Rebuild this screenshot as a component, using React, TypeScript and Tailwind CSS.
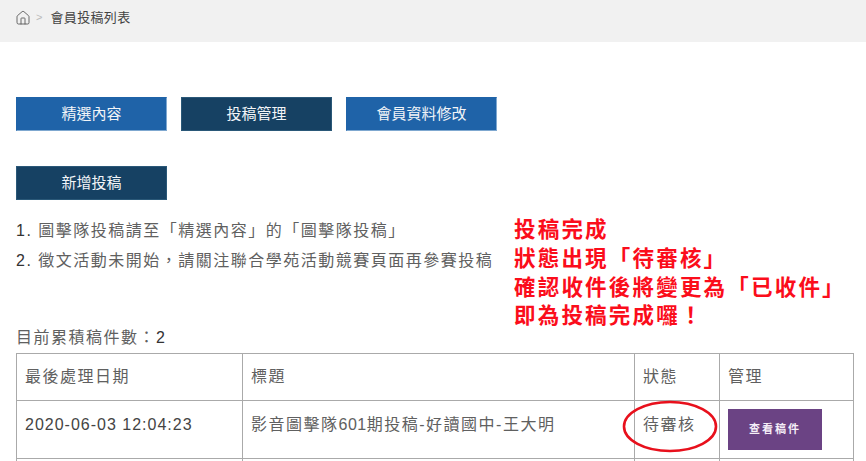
import { House } from "lucide-react";

const font = { fontFamily: '"Liberation Sans", "Noto Sans CJK TC", sans-serif' };

function NavButton({ label, active }: { label: string; active?: boolean }) {
  return (
    <div
      className={
        active
          ? "w-[151px] h-[34px] flex items-center justify-center bg-[#164163] border border-[#2a5878] text-[15px] leading-[20px] text-[#f2f5f8]"
          : "w-[151px] h-[34px] flex items-center justify-center bg-[#1f63a8] border border-[#1f63a8] border-b-[#7fa8d0] border-r-[#7fa8d0] text-[15px] leading-[20px] text-[#f2f5f8]"
      }
    >
      {label}
    </div>
  );
}

export default function App() {
  return (
    <div className="relative w-[866px] h-[461px] overflow-hidden bg-white text-[#606060]" style={font}>
      <div className="h-[42px] bg-[#f1f1f1] flex items-center pl-[15px] pb-[7px]">
        <House size={16} strokeWidth={1.3} className="text-[#555]" />
        <span className="ml-[5px] text-[11px] text-[#bbb]">&gt;</span>
        <span className="ml-[8px] text-[13px] tracking-[0.35px] text-[#444]">會員投稿列表</span>
      </div>

      <div className="px-[16px]">
        <div className="flex gap-[14px] mt-[55px]">
          <NavButton label="精選內容" />
          <NavButton label="投稿管理" active />
          <NavButton label="會員資料修改" />
        </div>
        <div className="mt-[35px]">
          <NavButton label="新增投稿" active />
        </div>

        <ol className="mt-[16px] text-[16px] leading-[30px] tracking-[1.5px]">
          <li><span className="text-[#333]">1.</span> 圖擊隊投稿請至「精選內容」的「圖擊隊投稿」</li>
          <li><span className="text-[#333]">2.</span> 徵文活動未開始，請關注聯合學苑活動競賽頁面再參賽投稿</li>
        </ol>

        <div className="mt-[51px] text-[16px] leading-[22px] tracking-[1.5px]">
          目前累積稿件數：<span className="text-[#333]">2</span>
        </div>

        <table className="mt-[4px] w-[838px] table-fixed border-collapse text-[16px] tracking-[1.5px]">
          <colgroup>
            <col className="w-[226px]" />
            <col className="w-[392px]" />
            <col className="w-[85px]" />
            <col />
          </colgroup>
          <tbody>
            <tr className="h-[47px]">
              <td className="border border-[#aaa] pl-[8px]">最後處理日期</td>
              <td className="border border-[#aaa] pl-[8px]">標題</td>
              <td className="border border-[#aaa] pl-[8px]">狀態</td>
              <td className="border border-[#aaa] pl-[8px]">管理</td>
            </tr>
            <tr className="h-[58px]">
              <td className="border border-[#aaa] pl-[8px] align-top pt-[12px] tracking-[1px] text-[#444]">2020-06-03 12:04:23</td>
              <td className="border border-[#aaa] pl-[8px] align-top pt-[12px]">影音圖擊隊<span className="tracking-[0.5px]">601</span>期投稿-好讀國中-王大明</td>
              <td className="border border-[#aaa] pl-[8px] align-top pt-[12px]">待審核</td>
              <td className="border border-[#aaa] pl-[8px] align-top pt-[8px]">
                <div className="w-[94px] h-[41px] flex items-center justify-center bg-[#6b4384] text-[11px] font-bold tracking-[2px] text-[#f4eef7]">
                  查看稿件
                </div>
              </td>
            </tr>
            <tr className="h-[20px]">
              <td className="border border-[#aaa]" />
              <td className="border border-[#aaa]" />
              <td className="border border-[#aaa]" />
              <td className="border border-[#aaa]" />
            </tr>
          </tbody>
        </table>
      </div>

      {/* annotation pasted over the screenshot */}
      <div className="absolute left-[514px] top-[216px] text-[21.5px] leading-[28.8px] font-bold tracking-[2.2px] text-[#fb0d1b] whitespace-nowrap">
        <div>投稿完成</div>
        <div>狀態出現「待審核」</div>
        <div>確認收件後將變更為「已收件」</div>
        <div>即為投稿完成囉！</div>
      </div>
      <svg className="absolute left-[620px] top-[398px]" width="100" height="58" viewBox="0 0 100 58" fill="none">
        <ellipse cx="50" cy="28.5" rx="46" ry="24.5" stroke="#e8101c" strokeWidth="2.6" />
      </svg>
    </div>
  );
}
